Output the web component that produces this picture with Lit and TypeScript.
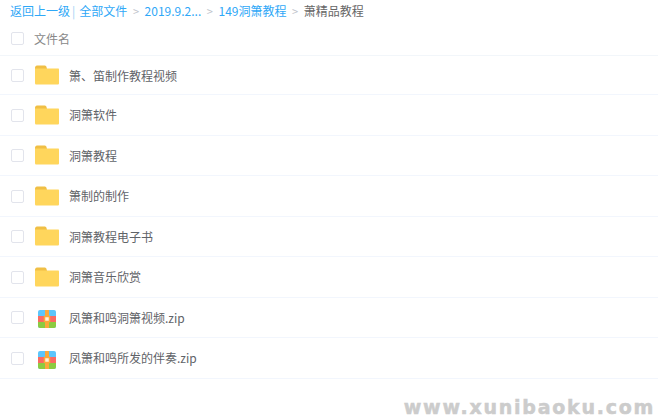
import { LitElement, html, css, svg } from "lit";
import { customElement } from "lit/decorators.js";

const rows: [string, boolean][] = [
  ["箫、笛制作教程视频", false],
  ["洞箫软件", false],
  ["洞箫教程", false],
  ["箫制的制作", false],
  ["洞箫教程电子书", false],
  ["洞箫音乐欣赏", false],
  ["凤箫和鸣洞箫视频.zip", true],
  ["凤箫和鸣所发的伴奏.zip", true],
];

const folder = svg`<svg class="icon" width="26" height="20" viewBox="0 0 26 20">
  <path d="M1 3C1 1.500 1.800 .5 3 .5h7.500c1 0 1.600.5 2 1.500l.5 2H1z" fill="#f0bf45"/>
  <path d="M1 3.500h23c.8 0 1 .5 1 1v13.500c0 1-.5 1.500-1.500 1.500h-21C1.500 19.500 1 19 1 18z" fill="#ffd65c"/>
</svg>`;

const zip = svg`<svg class="icon" width="20" height="20" viewBox="0 0 20 20">
  <rect x="1" y="1" width="18" height="18" rx="2" fill="#5cc5fb"/>
  <rect x="1" y="7" width="18" height="6" fill="#fb6a62"/>
  <path d="M1 13h18v4a2 2 0 0 1-2 2H3a2 2 0 0 1-2-2z" fill="#8ccb41"/>
  <rect x="8" y="1" width="4" height="18" fill="#fba93a"/>
  <rect x="7.500" y="7.500" width="5" height="5" fill="#fff1dc" stroke="#fba93a" stroke-width="1.500"/>
</svg>`;

@customElement("app-root")
export class AppRoot extends LitElement {
  static styles = css`
    :host {
      display: block;
      position: relative;
      width: 658px;
      height: 420px;
      overflow: hidden;
      background: #fff;
      font-family: "Noto Sans CJK SC", "Liberation Sans", sans-serif;
      font-size: 12px;
      color: #666;
    }
    .crumbs {
      display: flex;
      align-items: center;
      box-sizing: border-box;
      height: 24px;
      padding: 0 0 3px 10px;
      white-space: nowrap;
    }
    .crumbs a { color: #2fa8f7; }
    .sep { color: #c0c4cc; margin: 0 5.600px; font-size: 11px; }
    .bar { color: #9ccff5; margin: 0 4px 0 2px; }
    .cur { color: #666; }
    .head {
      display: flex;
      align-items: center;
      box-sizing: border-box;
      height: 32px;
      padding: 0 0 2px 11px;
      border-bottom: 1px solid #f2f6fa;
      color: #888;
    }
    .head .name { margin-left: 10px; }
    .row {
      display: flex;
      align-items: center;
      box-sizing: border-box;
      height: 40.500px;
      padding-left: 11px;
      border-bottom: 1px solid #f2f6fd;
    }
    .row:first-of-type { height: 39px; }
    .box {
      width: 11px;
      height: 11px;
      border: 1px solid #e2e4ec;
      border-radius: 2px;
      flex: none;
    }
    .slot {
      width: 26px;
      margin-left: 10px;
      display: flex;
      justify-content: center;
      flex: none;
    }
    .slot.zip { padding-top: 4px; }
    .row .box { margin-top: 1px; }
    .label { margin-left: 9px; color: #5f6368; }
    .mark {
      position: absolute;
      right: 3px;
      bottom: 3px;
      font-family: "DejaVu Sans", sans-serif;
      font-weight: 700;
      font-size: 19px;
      line-height: 20px;
      letter-spacing: 1.750px;
      color: #ccc;
      -webkit-text-stroke: 0.5px #ccc;
    }
  `;

  render() {
    return html`
      <div class="crumbs">
        <a>返回上一级</a><span class="bar">|</span><a>全部文件</a>
        <span class="sep">&gt;</span><a>2019.9.2...</a>
        <span class="sep">&gt;</span><a>149洞箫教程</a>
        <span class="sep">&gt;</span><span class="cur">萧精品教程</span>
      </div>
      <div class="head"><span class="box"></span><span class="name">文件名</span></div>
      <div>
      ${rows.map(
        ([n, z]) => html`<div class="row">
          <span class="box"></span>
          <span class="slot ${z ? "zip" : ""}">${z ? zip : folder}</span>
          <span class="label">${n}</span>
        </div>`
      )}
      </div>
      <div class="mark">www.xunibaoku.com</div>
    `;
  }
}
